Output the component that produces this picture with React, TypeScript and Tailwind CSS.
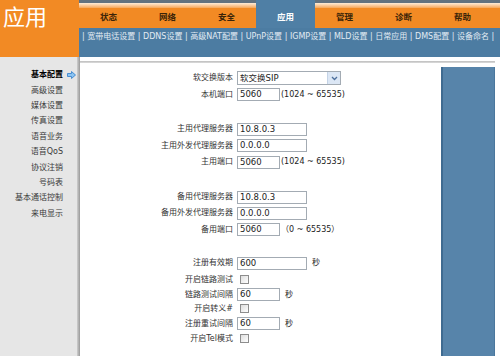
import React from "react";

const FONT = "font-['DejaVu_Sans','Noto_Sans_CJK_SC',sans-serif]";

function Row({ label, h, children }: { label: string; h: string; children?: React.ReactNode }) {
  return (
    <div className={`flex items-center ${h}`}>
      <div className="w-[153px] shrink-0 text-right text-[8px] leading-none text-[#333]">{label}</div>
      <div className="flex items-center pl-[4px]">{children}</div>
    </div>
  );
}

function Field({ value, long }: { value: string; long?: boolean }) {
  return (
    <div
      className={`${long ? "w-[70px]" : "w-[43px]"} h-[13px] border border-[#a3abb3] bg-white pl-[2px] text-[8.5px] leading-[11px] text-[#222]`}
    >
      {value}
    </div>
  );
}

function Check() {
  return <div className="ml-[3px] h-[9px] w-[9px] border border-[#8d8d8d] bg-gradient-to-br from-[#dedede] to-white" />;
}

function Note({ children, ml }: { children: React.ReactNode; ml: string }) {
  return <span className={`${ml} text-[8px] leading-none text-[#222]`}>{children}</span>;
}

export default function App() {
  const tabs = ["状态", "网络", "安全", "应用", "管理", "诊断", "帮助"];
  const sub = ["宽带电话设置", "DDNS设置", "高级NAT配置", "UPnP设置", "IGMP设置", "MLD设置", "日常应用", "DMS配置", "设备命名"];
  const side = ["高级设置", "媒体设置", "传真设置", "语音业务", "语音QoS", "协议注销", "号码表", "基本通话控制", "来电显示"];

  return (
    <div className={`w-[500px] h-[356px] overflow-hidden bg-white ${FONT}`}>
      {/* header */}
      <div className="flex h-[57px]">
        <div className="w-[79px] shrink-0 bg-[#f28a24] pl-[3px] pt-[1px]">
          <div className="text-[22px] leading-[28px] text-white font-['Noto_Sans_CJK_SC',sans-serif]">应用</div>
        </div>
        <div className="flex flex-1 flex-col">
          <div className="flex h-[28px]">
            {tabs.map((t) =>
              t === "应用" ? (
                <div
                  key={t}
                  className="flex w-[59px] items-center justify-center bg-[#4f7fa5] pt-[8px] pb-[2px] text-[8.5px] font-bold text-white"
                >
                  {t}
                </div>
              ) : (
                <div key={t} className="flex w-[59px] flex-col">
                  <div className="h-[3px] bg-[#62727f]" />
                  <div className="h-[5px] bg-gradient-to-b from-[#fcecd8] to-[#f5a656]" />
                  <div className="flex flex-1 items-center justify-center bg-[#f28a24] pb-[2px] text-[8.5px] font-bold text-[#3b2408]">
                    {t}
                  </div>
                </div>
              )
            )}
            <div className="flex flex-1 flex-col">
              <div className="h-[3px] bg-[#62727f]" />
              <div className="h-[5px] bg-gradient-to-b from-[#fcecd8] to-[#f5a656]" />
              <div className="flex-1 bg-[#f28a24]" />
            </div>
          </div>
          <div className="h-[29px] whitespace-nowrap bg-[#4c7ca2] pl-[3px] pt-[4px] text-[8px] leading-[10px] text-[#e2ebf3]">
            {"| " + sub.join(" | ") + " |"}
          </div>
        </div>
      </div>

      {/* body */}
      <div className="flex h-[299px]">
        {/* sidebar */}
        <div className="flex w-[80px] shrink-0">
          <div className="flex w-[77px] flex-col bg-[#e6e6e6] pt-[10px] text-[8px] leading-none">
            <div className="flex h-[16px] items-center justify-end">
              <span className="font-bold text-black">基本配置</span>
              <div className="flex w-[14px] pl-[4px]">
                <svg width="9" height="8" viewBox="0 0 9 8">
                  <polygon points="0.5,2.5 4.5,2.5 4.5,0.5 8.5,4 4.5,7.5 4.5,5.5 0.5,5.5" fill="#8cc4f2" stroke="#3c86cf" strokeWidth="0.9" />
                </svg>
              </div>
            </div>
            {side.map((s) => (
              <div key={s} className="flex h-[15.4px] items-center justify-end">
                <span className="text-[#3a3a3a]">{s}</span>
                <div className="w-[14px]" />
              </div>
            ))}
          </div>
          <div className="w-[3px] bg-gradient-to-r from-[#cfcfcf] to-[#999]" />
        </div>

        {/* main */}
        <div className="flex flex-1 flex-col">
          <div className="h-[4px]" />
          <div className="mr-[5px] h-[2px] bg-gradient-to-b from-[#bdbdbd] to-[#dcdcdc]" />
          <div className="flex flex-1">
            <div className="flex flex-1 flex-col pt-[7px]">
              <Row label="软交换版本" h="h-[16px]">
                <div className="flex h-[14px] w-[104px] items-center border border-[#a3abb3] bg-white">
                  <span className="flex-1 pl-[2px] text-[8.5px] leading-none text-[#222]">软交换SIP</span>
                  <div className="flex h-full w-[13px] items-center justify-center border-l border-[#c4d3e6] bg-[#dce7f5]">
                    <svg width="7" height="5" viewBox="0 0 7 5">
                      <polyline points="1,1 3.5,3.5 6,1" fill="none" stroke="#4d6f9c" strokeWidth="1.3" />
                    </svg>
                  </div>
                </div>
              </Row>
              <Row label="本机端口" h="h-[17px]">
                <Field value="5060" />
                <Note ml="ml-[1px]">(1024 ~ 65535)</Note>
              </Row>
              <div className="h-[18px]" />
              <Row label="主用代理服务器" h="h-[16px]">
                <Field value="10.8.0.3" long />
              </Row>
              <Row label="主用外发代理服务器" h="h-[17px]">
                <Field value="0.0.0.0" long />
              </Row>
              <Row label="主用端口" h="h-[16px]">
                <Field value="5060" />
                <Note ml="ml-[1px]">(1024 ~ 65535)</Note>
              </Row>
              <div className="h-[19px]" />
              <Row label="备用代理服务器" h="h-[16px]">
                <Field value="10.8.0.3" long />
              </Row>
              <Row label="备用外发代理服务器" h="h-[16px]">
                <Field value="0.0.0.0" long />
              </Row>
              <Row label="备用端口" h="h-[17px]">
                <Field value="5060" />
                <Note ml="ml-[1px]">（0 ~ 65535）</Note>
              </Row>
              <div className="h-[17px]" />
              <Row label="注册有效期" h="h-[16px]">
                <Field value="600" long />
                <Note ml="ml-[5px]">秒</Note>
              </Row>
              <Row label="开启链路测试" h="h-[17px]">
                <Check />
              </Row>
              <Row label="链路测试间隔" h="h-[13px]">
                <Field value="60" />
                <Note ml="ml-[5px]">秒</Note>
              </Row>
              <Row label="开启转义#" h="h-[15px]">
                <Check />
              </Row>
              <Row label="注册重试间隔" h="h-[15px]">
                <Field value="60" />
                <Note ml="ml-[5px]">秒</Note>
              </Row>
              <Row label="开启Tel模式" h="h-[15px]">
                <Check />
              </Row>
            </div>
            <div className="mt-[4px] mr-[5px] w-[54px] border-l-2 border-r border-l-[#3f6b91] border-r-[#4a779d] bg-[#5784aa]" />
          </div>
        </div>
      </div>
    </div>
  );
}
